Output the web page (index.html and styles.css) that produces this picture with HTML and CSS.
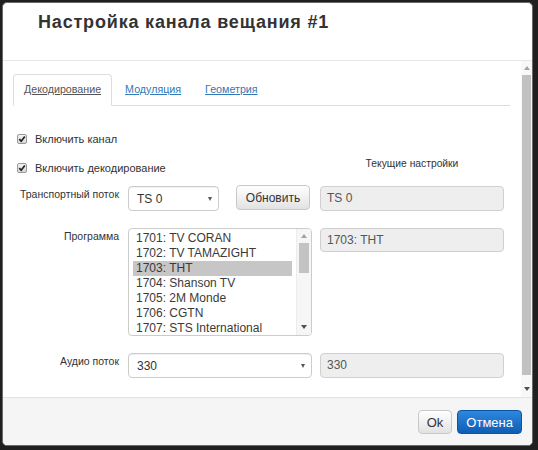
FILE: index.html
```html
<!DOCTYPE html>
<html lang="ru">
<head>
<meta charset="utf-8">
<title>Настройка канала вещания #1</title>
<link rel="stylesheet" href="styles.css">
</head>
<body>
<div class="modal">
  <div class="modal-header">
    <h1 class="title">Настройка канала вещания #1</h1>
  </div>
  <div class="modal-body">
    <div class="body-content">
      <ul class="tabs">
        <li class="tab active">Декодирование</li>
        <li class="tab"><a href="#">Модуляция</a></li>
        <li class="tab"><a href="#">Геометрия</a></li>
      </ul>

      <div class="check-row first">
        <svg class="cb" width="10" height="10" viewBox="0 0 10 10"><defs><linearGradient id="g1" x1="0" y1="0" x2="0" y2="1"><stop offset="0" stop-color="#f4f4f4"/><stop offset="1" stop-color="#d6d6d6"/></linearGradient></defs><rect x="0.5" y="0.5" width="9" height="9" rx="1.5" fill="url(#g1)" stroke="#9a9a9a"/><path d="M2.3 5.1 L4.2 7.2 L7.8 2.5" fill="none" stroke="#222" stroke-width="1.7"/></svg>
        <span>Включить канал</span>
      </div>

      <div class="row-current">
        <div class="check-row second">
          <svg class="cb" width="10" height="10" viewBox="0 0 10 10"><rect x="0.5" y="0.5" width="9" height="9" rx="1.5" fill="url(#g1)" stroke="#9a9a9a"/><path d="M2.3 5.1 L4.2 7.2 L7.8 2.5" fill="none" stroke="#222" stroke-width="1.7"/></svg>
          <span>Включить декодирование</span>
        </div>
        <div class="current-title">Текущие настройки</div>
      </div>

      <div class="form-grid">
        <div class="lbl">Транспортный поток</div>
        <div class="pair">
          <div class="select ts"><span>TS 0</span><span class="caret"></span></div>
          <button class="btn refresh">Обновить</button>
        </div>
        <div class="field">TS 0</div>

        <div class="lbl">Программа</div>
        <div class="listbox">
          <div class="list-items">
            <div class="item">1701: TV CORAN</div>
            <div class="item">1702: TV TAMAZIGHT</div>
            <div class="item sel">1703: THT</div>
            <div class="item">1704: Shanson TV</div>
            <div class="item">1705: 2M Monde</div>
            <div class="item">1706: CGTN</div>
            <div class="item">1707: STS International</div>
          </div>
          <div class="lb-scroll">
            <span class="arr up"></span>
            <span class="lb-thumb"></span>
            <span class="arr down lb-down"></span>
          </div>
        </div>
        <div class="field short">1703: THT</div>

        <div class="lbl">Аудио поток</div>
        <div class="select"><span>330</span><span class="caret"></span></div>
        <div class="field">330</div>
      </div>
    </div>
    <div class="vscroll">
      <span class="arr up light"></span>
      <span class="v-thumb"></span>
      <span class="arr down v-down"></span>
    </div>
  </div>
  <div class="modal-footer">
    <button class="btn">Ok</button>
    <button class="btn primary">Отмена</button>
  </div>
</div>
</body>
</html>
```

FILE: styles.css
```css
html, body {
  margin: 0;
}
body {
  padding: 2px;
  width: 538px;
  height: 450px;
  box-sizing: border-box;
  background: #202020;
  font-family: "Liberation Sans", Arial, sans-serif;
  font-size: 12px;
  color: #333;
  overflow: hidden;
}
.modal {
  width: 531px;
  height: 444px;
  box-sizing: border-box;
  background: #fff;
  border: 1px solid #6a6a6a;
  border-radius: 5px;
  display: flex;
  flex-direction: column;
  overflow: hidden;
}
.modal-header {
  padding: 9px 35px 28px;
  border-bottom: 1px solid #e8e8e8;
}
.title {
  margin: 0;
  font-size: 18px;
  line-height: 20px;
  font-weight: bold;
  letter-spacing: 0.82px;
  color: #333;
}
.modal-body {
  height: 336px;
  display: flex;
  flex: none;
}
.body-content {
  flex: 1;
  padding: 13px 11px 0 10px;
  overflow: hidden;
}
.tabs {
  margin: 0;
  padding: 0;
  list-style: none;
  display: flex;
  height: 31px;
  border-bottom: 1px solid #ddd;
  font-size: 10.7px;
}
.tab {
  margin: 0 2px -1px 0;
  padding: 0 10px;
  height: 30px;
  line-height: 29px;
  border: 1px solid transparent;
  border-radius: 4px 4px 0 0;
  white-space: nowrap;
}
.tab.active {
  border-color: #ddd #ddd #fff;
  background: #fff;
  color: #555;
  text-decoration: underline;
}
.tab a {
  color: #3379b5;
  text-decoration: underline;
}
.check-row {
  display: flex;
  align-items: center;
  gap: 8px;
  height: 16px;
  padding-left: 4px;
  font-size: 11px;
  white-space: nowrap;
}
.check-row.first {
  margin-top: 25px;
}
.cb {
  display: block;
  flex: none;
}
.row-current {
  display: grid;
  grid-template-columns: 299px 184px;
  column-gap: 8px;
  margin-top: 9px;
}
.check-row.second {
  margin-top: 4px;
}
.current-title {
  text-align: center;
  line-height: 16px;
  font-size: 10.3px;
  white-space: nowrap;
}
.form-grid {
  display: grid;
  grid-template-columns: 107px 184px 184px;
  column-gap: 8px;
  row-gap: 17px;
  margin-top: 10px;
  align-items: start;
}
.lbl {
  text-align: right;
  line-height: 16px;
  padding-right: 1px;
  font-size: 10.5px;
  white-space: nowrap;
}
.pair {
  display: flex;
  gap: 17px;
}
.select {
  height: 25px;
  box-sizing: border-box;
  border: 1px solid #ccc;
  border-radius: 4px;
  padding: 0 6px 0 8px;
  display: flex;
  align-items: center;
  justify-content: space-between;
  background: #fff;
  color: #333;
  box-shadow: inset 0 1px 1px rgba(0,0,0,0.06);
}
.select.ts {
  width: 91px;
}
.caret {
  width: 0;
  height: 0;
  border-left: 2.5px solid transparent;
  border-right: 2.5px solid transparent;
  border-top: 4px solid #555;
}
.btn {
  font-family: "Liberation Sans", Arial, sans-serif;
  font-size: 13px;
  height: 24px;
  padding: 0 8px;
  border: 1px solid #c8c8c8;
  border-radius: 4px;
  background: linear-gradient(#ffffff, #e2e2e2);
  color: #333;
}
.btn.refresh {
  font-size: 12px;
  width: 74px;
  height: 25px;
  margin-top: -1px;
}
.btn.primary {
  background: linear-gradient(#2e87de, #0f5db4);
  border-color: #0e54a4;
  color: #fff;
}
.field {
  height: 25px;
  box-sizing: border-box;
  border: 1px solid #d0d0d0;
  border-radius: 4px;
  background: #eee;
  padding-left: 6px;
  line-height: 23px;
  color: #555;
}
.field.short {
  height: 24px;
  line-height: 22px;
}
.listbox {
  height: 108px;
  box-sizing: border-box;
  border: 1px solid #ccc;
  border-radius: 4px;
  display: flex;
  overflow: hidden;
  background: #fff;
}
.list-items {
  flex: 1;
  padding: 2px 4px 0;
  overflow: hidden;
}
.item {
  line-height: 15px;
  height: 15px;
  padding-left: 3px;
  white-space: nowrap;
  color: #3a3a3a;
}
.item.sel {
  background: #c6c6c6;
}
.lb-scroll {
  width: 14px;
  flex: none;
  background: #f6f6f6;
  border-left: 1px solid #ececec;
  display: flex;
  flex-direction: column;
  align-items: center;
  padding-top: 5px;
}
.arr {
  width: 0;
  height: 0;
  border-left: 3px solid transparent;
  border-right: 3px solid transparent;
}
.arr.up {
  border-bottom: 4px solid #a3a3a3;
}
.arr.down {
  border-top: 4px solid #505050;
}
.lb-thumb {
  width: 10px;
  height: 30px;
  margin-top: 5px;
  background: #c3c3c3;
}
.lb-down {
  margin-top: 52px;
}
.vscroll {
  width: 11px;
  flex: none;
  background: #f8f8f8;
  display: flex;
  flex-direction: column;
  align-items: center;
  padding-top: 5px;
}
.v-thumb {
  width: 9px;
  height: 300px;
  margin-top: 5px;
  background: #c1c1c1;
}
.v-down {
  margin-top: 12px;
}
.modal-footer {
  flex: 1;
  display: flex;
  justify-content: flex-end;
  align-items: flex-start;
  gap: 5px;
  padding: 12px 10px 0;
  background: #f5f5f5;
  border-top: 1px solid #e3e3e3;
}
```
